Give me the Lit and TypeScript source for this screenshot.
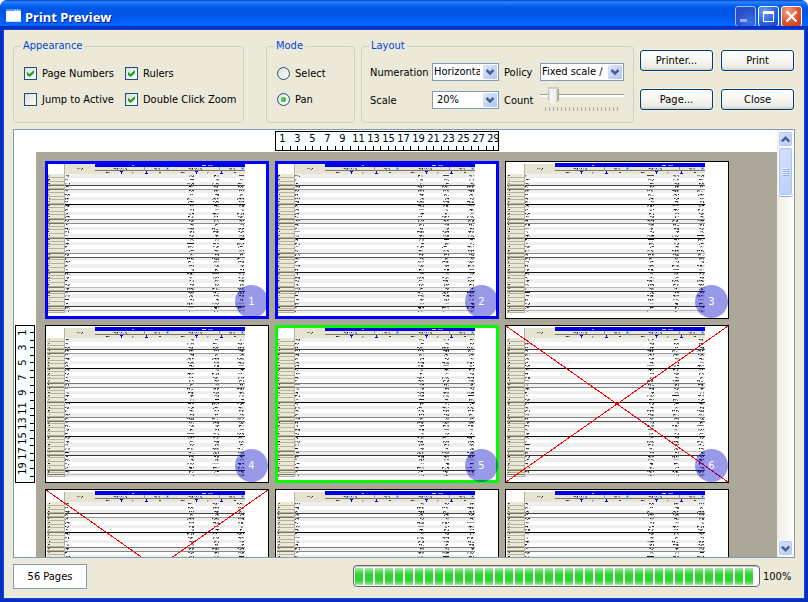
import { LitElement, html, svg, css } from "lit";
import { customElement, property, state } from "lit/decorators.js";
import { classMap } from "lit/directives/class-map.js";

const PAGE_W = 224;
const PAGE_H = 158;

type PageState = "plain" | "selected" | "current" | "excluded";

@customElement("page-ruler")
class PageRuler extends LitElement {
  static styles = css`
    :host { display: block; }
    svg { display: block; }
    .face { fill: #f7ffff; stroke: #000; }
    .tick { stroke: #000; }
    text { font: 11px "DejaVu Sans Condensed", "DejaVu Sans", sans-serif; text-anchor: middle; fill: #000; }
  `;

  @property({ type: Boolean }) vertical = false;

  render() {
    const length = this.vertical ? PAGE_H : PAGE_W;
    const w = this.vertical ? 20 : length;
    const h = this.vertical ? length : 20;
    const marks: number[] = [];
    for (let n = 1; n * 7.55 < length - 3; n++) marks.push(n);
    return html`<svg width=${w} height=${h} viewBox="0 0 ${w} ${h}">
      <rect class="face" x="0.5" y="0.5" width=${w - 1} height=${h - 1}></rect>
      ${marks.map((n) => {
        const p = Math.floor(n * 7.55) + 0.5;
        const line = this.vertical
          ? svg`<path class="tick" d="M15 ${p}H20"></path>`
          : svg`<path class="tick" d="M${p} 15V20"></path>`;
        const label = n % 2 === 0
          ? ""
          : this.vertical
            ? svg`<text transform="translate(11 ${p}) rotate(-90)">${n}</text>`
            : svg`<text x=${p} y="11">${n}</text>`;
        return svg`${line}${label}`;
      })}
    </svg>`;
  }
}

@customElement("page-thumb")
class PageThumb extends LitElement {
  static styles = css`
    :host { display: block; position: relative; width: 224px; height: 158px; }
    svg { display: block; }
    .badge {
      position: absolute; right: 1px; bottom: 1px; width: 33px; height: 33px; border-radius: 50%;
      background: rgba(0, 0, 200, 0.4); color: #fff; text-align: center;
      font: 11px/34px "DejaVu Sans Condensed", "DejaVu Sans", sans-serif;
    }
  `;

  @property({ type: Number }) number = 1;
  @property() kind: PageState = "plain";

  private smear(x: number, y: number, width: number, seed: number) {
    const out = [];
    const tone = (seed * 7) % 5;
    for (let i = 0; i < width; i++) {
      const r = (seed * 73 + i * 151 + seed * i * 29) % 17;
      const top = ["#999", "#444", "#bbb", "#777", "#222"][(r + tone) % 5];
      const low = ["#ccc", "#888", "#555", "#ddd", "#aaa"][(r + seed) % 5];
      if (r > 3) out.push(svg`<rect x=${x + i} y=${y} width="1" height="1" fill=${top}></rect>`);
      if (r % 3 !== 0) out.push(svg`<rect x=${x + i} y=${y + 1} width="1" height="1" fill=${low}></rect>`);
    }
    return out;
  }

  render() {
    const rules: [number, string][] = [
      [24, "#444"], [28, "#999"], [43, "#000"], [58, "#777"], [62, "#888"], [77, "#000"], [92, "#888"],
      [96, "#555"], [111, "#111"], [126, "#bbb"], [130, "#333"], [145, "#333"], [149, "#bbb"],
    ];
    const rows = Array.from({ length: 37 }, (_, i) => Math.round(13 + i * 3.76));
    const last = 152;
    const framed = this.kind === "selected" || this.kind === "current";
    const edge = this.kind === "selected" ? "#0000ff" : this.kind === "current" ? "#00ff00" : "#000";
    const stroke = framed ? 3 : 1;
    const n = this.number;
    return html`
      <svg width=${PAGE_W} height=${PAGE_H} viewBox="0 0 224 158" shape-rendering="crispEdges">
        <rect width="224" height="158" fill="#fff"></rect>
        ${rows.map((y, i) => {
          const h = (rows[i + 1] ?? last) - y;
          return svg`
            ${i % 2 === 0 ? svg`<rect x="20" y=${y} width="180" height=${h} fill="#efefef"></rect>` : ""}
            <rect x="2" y=${y} width="17" height=${h} fill="#ebe8d6"></rect>
            <rect x="2" y=${y + h - 1} width="17" height="1" fill="#b4b19e"></rect>
            ${this.smear(3, y + 1, 2, i + n)}
            ${this.smear(20, y + 1, 3 + ((i * 5 + n) % 3), i + n + 3)}
            ${[146, 171, 196].map((x, c) => {
              const len = 4 + ((i * 3 + n) % 4);
              return this.smear(x + 3 - len, y + 1, len, i * 2 + c + n);
            })}`;
        })}
        ${rules.map(([y, c]) => svg`
          <rect x="2" y=${y} width="17" height="1" fill="#77745f"></rect>
          <rect x="19" y=${y} width="181" height="1" fill=${c}></rect>`)}
        <rect x="19" y="3" width="1" height="149" fill="#b5b2a0"></rect>
        <rect x="20" y="3" width="30" height="10" fill="#e6e3d0"></rect>
        ${this.smear(32, 7, 6, 5)}
        <rect x="50" y="2" width="150" height="4" fill="#0000e8"></rect>
        <rect x="87" y="4" width="2" height="1" fill="#aaf"></rect>
        <rect x="157" y="4" width="4" height="1" fill="#ccf"></rect>
        <rect x="163" y="4" width="5" height="1" fill="#88f"></rect>
        <rect x="50" y="6" width="150" height="7" fill="#e9e6d3"></rect>
        <rect x="50" y="9" width="150" height="1" fill="#77766a"></rect>
        ${[50, 125].map((x) => svg`
          ${this.smear(x + 18, 7, 14, 8)}
          ${this.smear(x + 58, 7, 7, 4)}
          ${this.smear(x + 10, 11, 6, 7)}
          ${this.smear(x + 37, 11, 4, 6)}
          ${this.smear(x + 64, 11, 2, 3)}
          <rect x=${x + 49} y="6" width="1" height="4" fill="#9c9987"></rect>
          <rect x=${x + 71} y="6" width="3" height="3" fill="#a8c4f0"></rect>
          <rect x=${x + 72} y="7" width="1" height="1" fill="#234a9a"></rect>
          <rect x=${x + 25} y="10" width="3" height="1" fill="#0000ff"></rect>
          <rect x=${x + 26} y="10" width="1" height="3" fill="#0000ff"></rect>
          <rect x=${x + 51} y="10" width="1" height="3" fill="#0000ff"></rect>
          <rect x=${x + 50} y="12" width="3" height="1" fill="#0000ff"></rect>`)}
        <rect x=${stroke / 2} y=${stroke / 2} width=${PAGE_W - stroke} height=${PAGE_H - stroke}
          fill="none" stroke=${edge} stroke-width=${stroke}></rect>
        ${this.kind === "excluded"
          ? svg`<path d="M1 1L223 157M223 1L1 157" stroke="#f00" fill="none"></path>`
          : ""}
      </svg>
      <div class="badge">${n}</div>
    `;
  }
}

@customElement("combo-box")
class ComboBox extends LitElement {
  static styles = css`
    :host { display: block; position: relative; height: 18px; }
    select {
      appearance: none; display: block; width: 100%; height: 18px; box-sizing: border-box; margin: 0;
      padding: 0 18px 0 1px; border: 1px solid #7f9db9; border-radius: 0; background: #fff; color: #000;
      font: 11px/16px "DejaVu Sans Condensed", "DejaVu Sans", sans-serif; outline: none;
      text-overflow: clip;
    }
    .inset { padding-left: 4px; }
    svg { position: absolute; right: 2px; top: 2px; pointer-events: none; }
  `;

  @property() label = "";
  @property() value = "";
  @property({ type: Boolean }) inset = false;

  render() {
    return html`
      <select class=${classMap({ inset: this.inset })} aria-label=${this.label}>
        <option>${this.value}</option>
      </select>
      <svg width="14" height="14" viewBox="0 0 14 14">
        <defs><linearGradient id="g" x1="0" y1="0" x2="1" y2="1">
          <stop offset="0" stop-color="#dfe8fe"></stop><stop offset="1" stop-color="#adc6f7"></stop>
        </linearGradient></defs>
        <rect width="14" height="14" rx="1" fill="url(#g)"></rect>
        <path d="M3.5 5L7 8.500L10.500 5" fill="none" stroke="#4d6185" stroke-width="2.500"></path>
      </svg>
    `;
  }
}

@customElement("app-root")
class AppRoot extends LitElement {
  static styles = css`
    :host {
      display: flex; flex-direction: column; box-sizing: border-box; height: 100vh; min-height: 320px;
      overflow: hidden; background: #0a43d8; border-radius: 7px 7px 0 0; color: #000;
      font: 11px/13px "DejaVu Sans Condensed", "DejaVu Sans", sans-serif;
    }
    button, input, select { font: inherit; margin: 0; box-sizing: border-box; }

    .title {
      display: flex; align-items: center; gap: 4px; flex: none; height: 30px; padding: 3px 6px 0 6px;
      box-sizing: border-box; border-radius: 7px 7px 0 0;
      background: linear-gradient(#0640c4 0, #2b86ff 2px, #0a68f4 5px, #0055e2 8px, #0056e8 15px, #0362fb 22px, #0467ff 26px, #0450d8 28px, #0140c0 30px);
    }
    .title h1 {
      flex: 1; margin: 0; color: #fff; font: bold 13px/16px "Noto Sans", sans-serif;
      text-shadow: 1px 1px 0 #0a1883;
    }
    .appicon { margin-top: -2px; }
    .controls { display: flex; gap: 2px; }
    .winbtn {
      width: 21px; height: 21px; padding: 0; border: 1px solid #fff; border-radius: 3px; display: block;
      background: radial-gradient(circle at 30% 25%, #6f9bf5, #2a5fe0 60%, #1b48c4);
    }
    .winbtn svg { display: block; }
    .dim { border-color: #a4bdf3; background: radial-gradient(circle at 70% 80%, #3b72e4, #2a52c8 60%, #2648b8); }
    .shut { background: radial-gradient(circle at 30% 25%, #f0a088, #e2532f 55%, #c43a14); }

    .frame {
      flex: 1; min-height: 0; display: flex; flex-direction: column; gap: 6px; margin: 0 4px 4px;
      padding: 9px; background: #ece9d8; box-shadow: 0 0 0 1px #0a4be8, 0 0 0 4px #0a2fc0;
    }

    .toolbar { display: flex; gap: 6px; flex: none; height: 84px; }
    fieldset {
      min-width: 0; box-sizing: border-box; margin: 0; padding: 14px 10px 0; border: 1px solid #d0d0bf;
      border-radius: 4px;
    }
    legend { margin-left: -3px; padding: 0 2px; height: 14px; line-height: 14px; color: #0046d5; }
    .appearance { flex: 0 1 231px; margin-right: 16px; }
    .mode { flex: 0 0 89px; }
    .layout { flex: 1 1 272px; padding: 10px 8px 0; }
    .layout legend { margin-left: -1px; }
    .checks { display: grid; grid-template-columns: 101px 1fr; row-gap: 13px; }
    .radios { display: grid; row-gap: 13px; }
    .choice { display: flex; align-items: center; gap: 5px; height: 13px; white-space: nowrap; }
    .box, .dot {
      appearance: none; flex: none; width: 13px; height: 13px; border: 1px solid #1c5180;
      background: linear-gradient(135deg, #dcdcd7, #fff); display: grid; place-items: center;
    }
    .dot { border-radius: 50%; }
    .box:checked::before {
      content: ""; width: 7px; height: 7px; background: #21a121;
      clip-path: polygon(0 24%, 36% 56%, 100% 0, 100% 42%, 38% 100%, 0 70%);
    }
    .dot:checked::before {
      content: ""; width: 5px; height: 5px; border-radius: 50%;
      background: radial-gradient(circle at 40% 40%, #55d551, #21a121);
    }

    .fields {
      display: grid; grid-template-columns: 62px 67px 41px minmax(60px, 1fr); grid-auto-rows: 18px;
      row-gap: 10px; align-items: center; white-space: nowrap; margin-right: 1px;
    }
    .second { padding-left: 5px; }
    .slide { align-self: start; margin-top: -4px; }
    .slider { appearance: none; display: block; width: 100%; height: 20px; background: none; padding: 0; }
    .slider::-webkit-slider-runnable-track {
      height: 20px;
      background:
        linear-gradient(#9d9c99, #9d9c99) 0 7px / 100% 1px no-repeat,
        linear-gradient(#fff, #fff) 0 8px / 100% 2px no-repeat;
    }
    .slider::-webkit-slider-thumb {
      appearance: none; width: 11px; height: 19px;
      background: linear-gradient(#c3c5bf 0, #d5d7d0 2px, transparent 2px), linear-gradient(90deg, #a9ada8 0, #f6f6f2 2px, #f0f0ea 8px, #a4a49c 10px);
      clip-path: polygon(1px 0, 10px 0, 100% 1px, 100% 13px, 50% 100%, 0 13px, 0 1px);
    }
    .ticks { height: 4px; margin: 0 4px 0 5px; background: repeating-linear-gradient(90deg, #aca899 0 1px, transparent 1px 4px); }

    .actions {
      flex: 0 0 155px; display: grid; grid-template-columns: 1fr 1fr; grid-auto-rows: 21px;
      gap: 18px 8px; padding: 11px 1px 0 0; box-sizing: border-box;
    }
    .push {
      padding: 0; border: 1px solid #003c74; border-radius: 3px; color: #000;
      background: linear-gradient(#fff, #f4f3ee 60%, #ecebe6 85%, #d6d0c5); box-shadow: 0 0 0 1px #f4f2e8;
    }

    .preview {
      flex: 1; min-height: 0; display: grid; grid-template: 22px minmax(0, 1fr) / 22px minmax(0, 1fr) 17px;
      border: 1px solid #7f9db9; background: #fff; overflow: hidden;
    }
    .across { grid-column: 2; grid-row: 1; display: grid; grid-template-columns: repeat(3, 224px); gap: 6px; padding: 1px 9px; overflow: hidden; }
    .across page-ruler { grid-column: 2; }
    .down { grid-column: 1; grid-row: 2; display: grid; grid-template-rows: repeat(3, 158px); gap: 6px; padding: 9px 1px; overflow: hidden; }
    .down page-ruler { grid-row: 2; }
    .desk {
      grid-column: 2; grid-row: 2; display: grid; grid-template-columns: repeat(3, 224px); grid-auto-rows: 158px;
      gap: 6px; padding: 9px; overflow: hidden; background: #aca899;
    }
    .scroll {
      grid-column: 3; grid-row: 1 / 3; display: flex; flex-direction: column; padding: 1px;
      background: linear-gradient(90deg, #eeede5, #fefefb);
    }
    .arrow, .thumb {
      display: grid; place-items: center; width: 15px; box-sizing: border-box; padding: 0;
      border: 1px solid #fff; border-radius: 3px;
      background: linear-gradient(135deg, #d5e1fe, #b9cdf9); box-shadow: inset 0 0 0 1px #b4c8f6;
    }
    .arrow { height: 16px; flex: none; }
    .thumb { height: 49px; flex: none; box-shadow: inset 0 0 0 1px #b0c4f4, 0 1px 0 #94aede; }
    .rest { flex: 1; }

    .status { flex: none; display: flex; align-items: center; gap: 3px; height: 25px; }
    .count {
      width: 74px; height: 25px; line-height: 23px; text-align: center; box-sizing: border-box;
      border: 1px solid #7f9db9; background: #fff;
    }
    .meter {
      appearance: none; display: block; box-sizing: border-box; width: 52%; height: 22px; margin: 0 0 1px auto;
      padding: 2px 5px 1px 1px; border: 1px solid #686868; border-radius: 4px; background: #fff;
      box-shadow: inset 0 1px 1px #bebebe;
    }
    .meter::-webkit-progress-inner-element { height: 100%; }
    .meter::-webkit-progress-bar { background: transparent; }
    .meter::-webkit-progress-value {
      background:
        repeating-linear-gradient(90deg, transparent 0 8px, #fff 8px 10px),
        linear-gradient(#a9ecab, #4fdb52 25%, #2bd42e 40% 70%, #5fe062 88%, #a9ecab);
    }
    .percent { flex: 0 0 32px; }
  `;

  @state() private pages: PageState[] = [
    "selected", "selected", "plain", "plain", "current", "excluded", "excluded", "plain", "plain",
  ];

  private check(text: string, on: boolean) {
    return html`<label class="choice"><input class="box" type="checkbox" .checked=${on}>${text}</label>`;
  }

  private radio(text: string, on: boolean) {
    return html`<label class="choice"><input class="dot" type="radio" name="mode" .checked=${on}>${text}</label>`;
  }

  render() {
    return html`
      <header class="title">
        <svg class="appicon" width="15" height="13" viewBox="0 0 15 13">
          <rect width="15" height="13" fill="#fff"></rect>
          <rect width="15" height="2" fill="#4a9cf0"></rect>
          <rect x="9" width="1" height="1" y="1" fill="#fff"></rect>
          <rect x="11" width="1" height="1" y="1" fill="#fff"></rect>
          <rect x="13" width="1" height="1" y="1" fill="#f0a080"></rect>
          <rect y="12" width="15" height="1" fill="#d8dff0"></rect>
        </svg>
        <h1>Print Preview</h1>
        <div class="controls">
          <button class="winbtn dim" aria-label="Minimize">
            <svg width="19" height="19"><rect x="4" y="12" width="7" height="3" fill="#8fabf0"></rect></svg>
          </button>
          <button class="winbtn" aria-label="Maximize">
            <svg width="19" height="19"><path d="M4.500 5V14.500H14.500V5" fill="none" stroke="#fff"></path><rect x="4" y="4" width="11" height="3" fill="#fff"></rect></svg>
          </button>
          <button class="winbtn shut" aria-label="Close window">
            <svg width="19" height="19"><path d="M4.500 4.500L14.500 14.500M14.500 4.500L4.500 14.500" stroke="#fff" stroke-width="2.300"></path></svg>
          </button>
        </div>
      </header>
      <main class="frame">
        <div class="toolbar">
          <fieldset class="appearance">
            <legend>Appearance</legend>
            <div class="checks">
              ${this.check("Page Numbers", true)} ${this.check("Rulers", true)}
              ${this.check("Jump to Active", false)} ${this.check("Double Click Zoom", true)}
            </div>
          </fieldset>
          <fieldset class="mode">
            <legend>Mode</legend>
            <div class="radios">${this.radio("Select", false)} ${this.radio("Pan", true)}</div>
          </fieldset>
          <fieldset class="layout">
            <legend>Layout</legend>
            <div class="fields">
              <span>Numeration</span>
              <combo-box label="Numeration" value="Horizontal"></combo-box>
              <span class="second">Policy</span>
              <combo-box label="Policy" value="Fixed scale / count"></combo-box>
              <span>Scale</span>
              <combo-box label="Scale" value="20%" inset></combo-box>
              <label class="second" for="count">Count</label>
              <div class="slide">
                <input class="slider" id="count" type="range" min="1" max="19" value="3">
                <div class="ticks"></div>
              </div>
            </div>
          </fieldset>
          <div class="actions">
            <button class="push">Printer...</button>
            <button class="push">Print</button>
            <button class="push">Page...</button>
            <button class="push">Close</button>
          </div>
        </div>
        <section class="preview">
          <div class="across"><page-ruler></page-ruler></div>
          <div class="down"><page-ruler vertical></page-ruler></div>
          <div class="desk">
            ${this.pages.map((kind, i) => html`<page-thumb .number=${i + 1} .kind=${kind}></page-thumb>`)}
          </div>
          <div class="scroll">
            <button class="arrow" aria-label="Scroll up">
              <svg width="9" height="7" viewBox="0 0 9 7"><path d="M0.800 5.500L4.500 1.800L8.200 5.500" fill="none" stroke="#4d6185" stroke-width="2.400"></path></svg>
            </button>
            <div class="thumb">
              <svg width="7" height="8" shape-rendering="crispEdges"><path d="M0 0.500H6M0 2.500H6M0 4.500H6M0 6.500H6" stroke="#eef4fe"></path><path d="M1 1.500H7M1 3.500H7M1 5.500H7M1 7.500H7" stroke="#8cb0f8"></path></svg>
            </div>
            <div class="rest"></div>
            <button class="arrow" aria-label="Scroll down">
              <svg width="9" height="7" viewBox="0 0 9 7"><path d="M0.800 1.500L4.500 5.200L8.200 1.500" fill="none" stroke="#4d6185" stroke-width="2.400"></path></svg>
            </button>
          </div>
        </section>
        <footer class="status">
          <div class="count">56 Pages</div>
          <progress class="meter" max="100" value="100" aria-label="Progress"></progress>
          <span class="percent">100%</span>
        </footer>
      </main>
    `;
  }
}
